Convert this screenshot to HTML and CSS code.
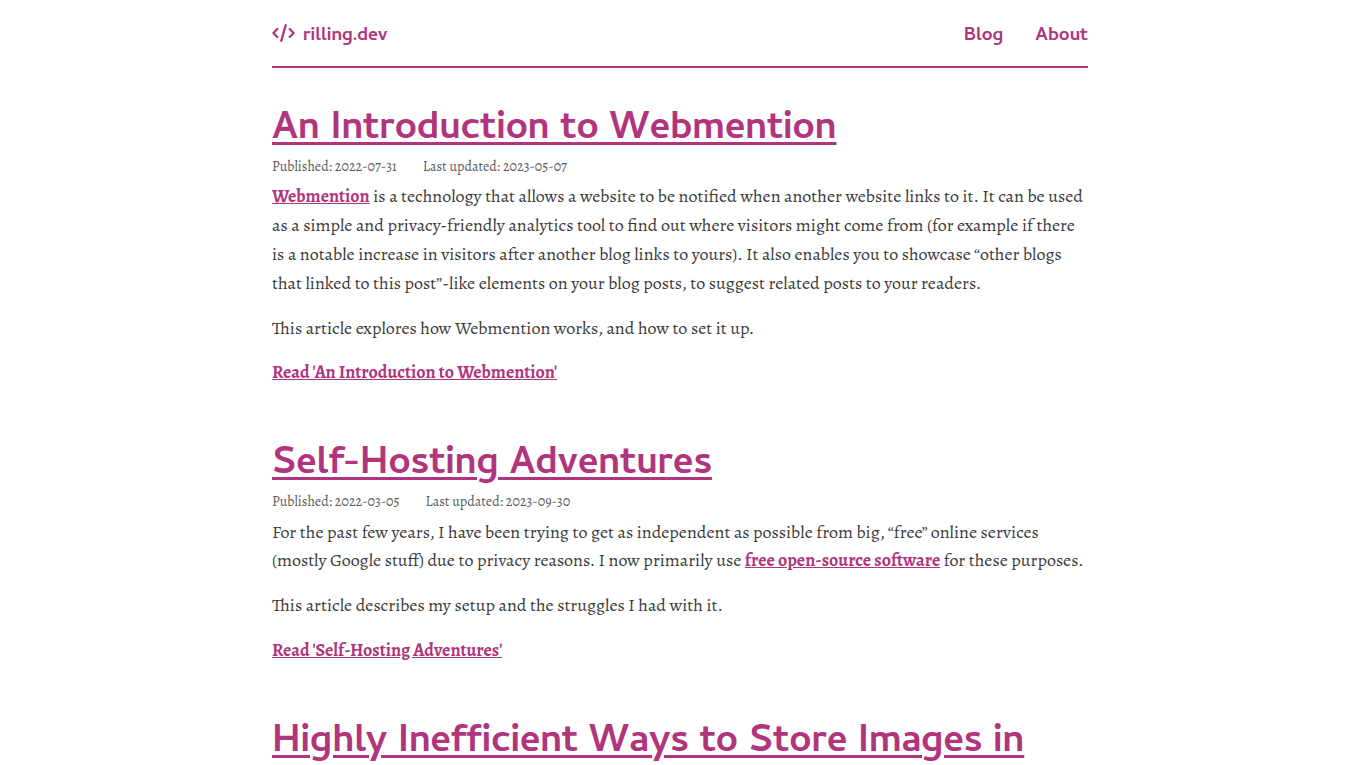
FILE: index.html
```html
<!DOCTYPE html>
<html lang="en">
<head>
<meta charset="utf-8">
<meta name="viewport" content="width=device-width, initial-scale=1">
<title>rilling.dev</title>
<link rel="stylesheet" href="styles.css">
</head>
<body>
<div class="container">
  <header class="header">
    <a class="brand" href="#">
      <svg class="brand-icon" viewBox="0 0 640 512" aria-hidden="true"><path d="M392.800 1.200c-17-4.900-34.700 5-39.600 22l-128 448c-4.900 17 5 34.700 22 39.600s34.700-5 39.600-22l128-448c4.900-17-5-34.700-22-39.600zm80.600 120.100c-12.500 12.500-12.500 32.800 0 45.300L562.700 256l-89.400 89.400c-12.500 12.500-12.500 32.800 0 45.300s32.800 12.500 45.300 0l112-112c12.500-12.500 12.500-32.800 0-45.300l-112-112c-12.500-12.500-32.800-12.500-45.300 0zm-306.700 0c-12.500-12.500-32.800-12.500-45.300 0l-112 112c-12.500 12.500-12.500 32.800 0 45.300l112 112c12.500 12.500 32.800 12.500 45.300 0s12.500-32.800 0-45.300L77.300 256l89.400-89.400c12.500-12.500 12.500-32.800 0-45.300z"/></svg>
      <span class="brand-name">rilling.dev</span>
    </a>
    <nav class="nav">
      <a href="#">Blog</a>
      <a href="#">About</a>
    </nav>
  </header>
  <main class="posts">
    <article class="post">
      <h2 class="title"><a href="#">An Introduction to Webmention</a></h2>
      <div class="meta"><span>Published: <time>2022-07-31</time></span><span>Last updated: <time>2023-05-07</time></span></div>
      <p><a href="#">Webmention</a> is a technology that allows a website to be notified when another website links to it. It can be used as a simple and privacy-friendly analytics tool to find out where visitors might come from (for example if there is a notable increase in visitors after another blog links to yours). It also enables you to showcase “other blogs that linked to this post”-like elements on your blog posts, to suggest related posts to your readers.</p>
      <p>This article explores how Webmention works, and how to set it up.</p>
      <p><a href="#">Read 'An Introduction to Webmention'</a></p>
    </article>
    <article class="post">
      <h2 class="title"><a href="#">Self-Hosting Adventures</a></h2>
      <div class="meta"><span>Published: <time>2022-03-05</time></span><span>Last updated: <time>2023-09-30</time></span></div>
      <p>For the past few years, I have been trying to get as independent as possible from big, “free” online services (mostly Google stuff) due to privacy reasons. I now primarily use <a href="#">free open-source software</a> for these purposes.</p>
      <p>This article describes my setup and the struggles I had with it.</p>
      <p><a href="#">Read 'Self-Hosting Adventures'</a></p>
    </article>
    <article class="post">
      <h2 class="title"><a href="#">Highly Inefficient Ways to Store Images in</a></h2>
    </article>
  </main>
</div>
</body>
</html>
```
FILE: styles.css
```css
* { box-sizing: border-box; }
body {
  margin: 0;
  background: #fff;
  color: #3a3a3a;
  font-family: Alegreya, "Liberation Serif", serif;
  font-size: 18px;
  line-height: 1.6;
}
a { color: #b0357c; font-weight: 700; }
.container { width: 60%; margin: 0 auto; }
.header {
  display: flex;
  justify-content: space-between;
  align-items: center;
  height: 68px;
  border-bottom: 2px solid #b0357c;
  font-family: Cambay, "Noto Sans", sans-serif;
  font-size: 19px;
}
.header a { text-decoration: none; }
.brand { display: flex; align-items: center; gap: 8px; }
.brand-icon { width: 23px; height: 18px; fill: currentColor; }
.brand-name, .nav { padding-top: 8px; }
.nav { display: flex; gap: 32px; }
.posts { padding-top: 38px; }
.post { margin-bottom: 54px; }
.title {
  margin: 0;
  font-family: Cambay, "Noto Sans", sans-serif;
  font-size: 39px;
  line-height: 50px;
}
.title a {
  text-decoration-thickness: 3px;
  text-underline-offset: 4px;
}
.meta { display: flex; gap: 26px; margin-bottom: 4px; font-size: 14px; color: #5a5a5a; }
p { margin: 0 0 16px; }
```
